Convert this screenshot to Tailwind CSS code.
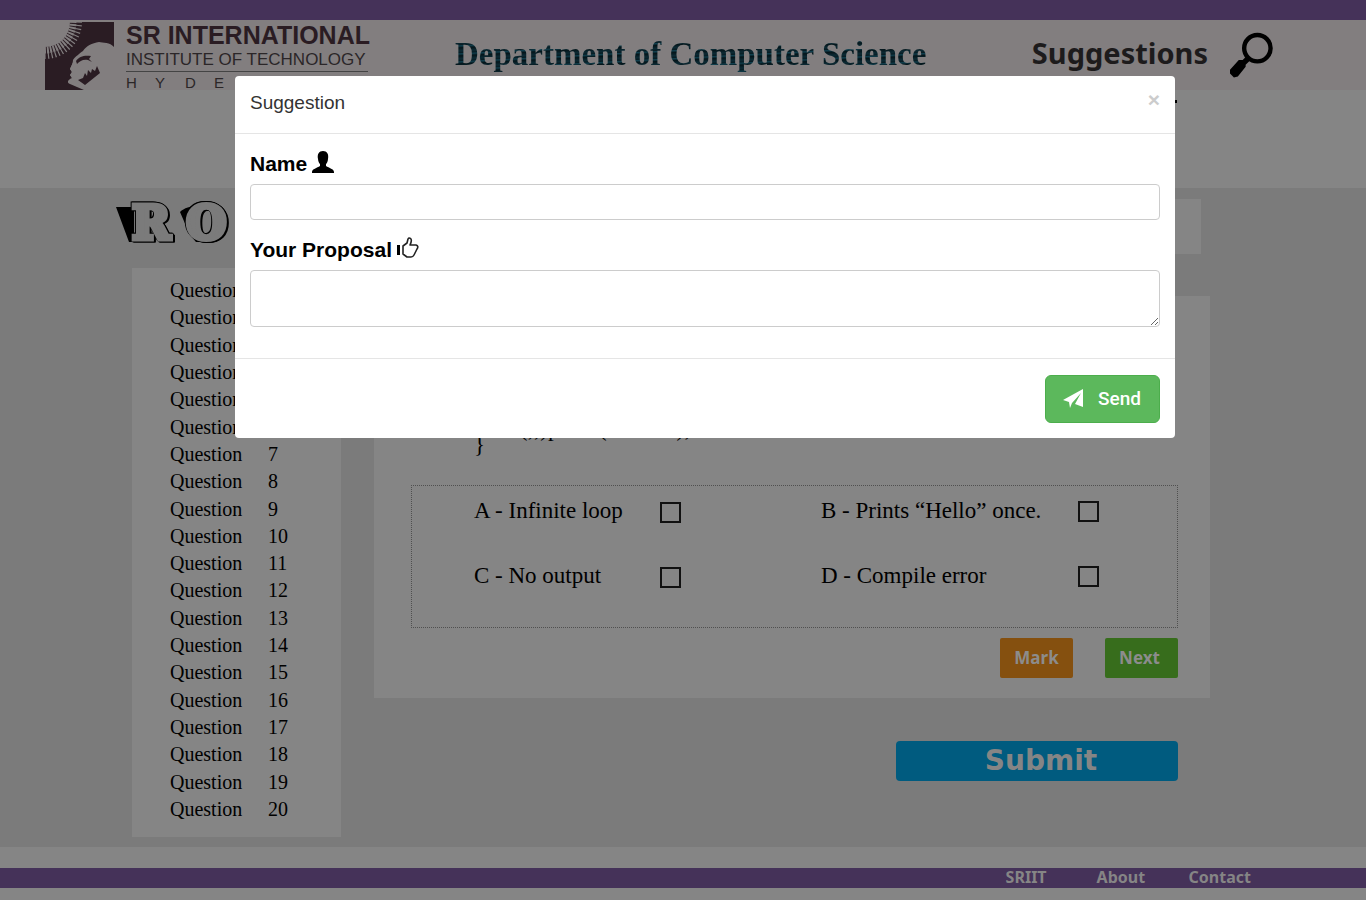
<!DOCTYPE html>
<html lang="en">
<head>
<meta charset="utf-8">
<meta name="viewport" content="width=device-width, initial-scale=1">
<title>SR International – Suggestion</title>
<script src="https://cdn.jsdelivr.net/npm/@tailwindcss/browser@4"></script>
</head>
<body class="relative min-h-screen bg-[#858585] text-black font-['Liberation_Sans',Arial,sans-serif]">

<div class="h-5 bg-[#453259]"></div>

<header class="flex h-[70px] items-start overflow-hidden bg-[#827e7f] pl-[45px] pr-[92px]">
  <svg class="mt-[2px] h-[68px] w-[69px] shrink-0" viewBox="0 0 69 68" aria-hidden="true">
    <path fill="#2a1c23" d="M0 0H69V25C65 20 58 21 54 20C47 21 41 24 38 29C35 31 30 35 28 38C28 42 26 44 25 47L27 50L25 53L27 56C22 58 22 61 25 62L39 68H0Z"/>
    <circle cx="0" cy="0" r="25" fill="#827e7f"/>
    <circle cx="0" cy="0" r="28" fill="none" stroke="#827e7f" stroke-width="7" pathLength="360" stroke-dasharray="4 2" stroke-dashoffset="2"/>
    <circle cx="0" cy="0" r="34" fill="none" stroke="#827e7f" stroke-width="6" pathLength="360" stroke-dasharray="2 4" stroke-dashoffset="1"/>
    <path fill="#827e7f" d="M29 38L32 43L34 46L41 53L40 57L31 60L27 56L25 53L27 50L25 47Z"/>
    <path fill="#2a1c23" d="M31 39C34 34 40 33 46 34L44 37L47 40L43 38C38 37 35 39 32 42Z"/>
    <path fill="#2a1c23" d="M52 44L55 51L40 63L33 58L38 56L40 51L42 54L43 48L46 51L47 47L50 49Z"/>
  </svg>
  <div class="ml-3 w-[242px] shrink-0 whitespace-nowrap">
    <div class="h-[30px] text-[25px] leading-[30px] font-bold text-[#2a1c23]">SR INTERNATIONAL</div>
    <div class="h-[22px] border-b border-[#444] text-[17px] leading-[20px] text-[#2b2628]">INSTITUTE OF TECHNOLOGY</div>
    <div class="flex pt-[3px] text-[15px] leading-4 text-[#2b2628]"><span class="w-[29px]">H</span><span class="w-[30px]">Y</span><span class="w-[29px]">D</span><span class="w-[29px]">E</span></div>
  </div>
  <h1 class="ml-[87px] mt-3 whitespace-nowrap bg-[repeating-linear-gradient(177deg,#04151a_0px,#0c2a34_3px,#071d24_5px,#11404f_6px,#04151a_8px)] bg-clip-text text-[33px] leading-[44px] font-bold text-transparent font-['Liberation_Serif',serif]">Department of Computer Science</h1>
  <a href="#suggestion" class="ml-auto mt-3 flex text-[29px] leading-[42px] font-bold text-[#1d1b1c] font-['Noto_Sans',sans-serif]">Suggestions
    <svg class="ml-[22px] h-[46px] w-[44px]" viewBox="0 0 45 46" aria-hidden="true"><circle cx="28" cy="16" r="13.5" fill="none" stroke="#000" stroke-width="4.5"/><path d="M17 24L21 28L16 33V35L8 45L4 46L0 42V38L9 28L13 28Z"/></svg>
  </a>
</header>

<div class="flex h-[98px] justify-end pr-[189px] pt-[10px]"><span class="h-[3px] w-[2px] bg-black"></span></div>

<main class="flex min-h-[659px] gap-[33px] bg-[#7b7b7b] pl-[132px] pr-[156px]">
  <aside class="w-[209px] shrink-0">
    <div class="relative mt-[11px] h-[69px]">
      <svg class="absolute -left-4 top-0 h-[46px] w-[120px]" viewBox="0 0 120 46" aria-hidden="true"><path d="M0 8H18V43H13ZM64 13C68 9 74 7 84 7V43H80L74 36Z"/></svg>
      <h2 class="relative flex gap-4 whitespace-nowrap text-[46px] leading-[48px] font-bold text-[#7b7b7b] [-webkit-text-stroke:5px_#7b7b7b] [filter:drop-shadow(1px_1px_0_black)_drop-shadow(-1px_-1px_0_black)_drop-shadow(1px_0_0_black)] font-['DejaVu_Serif',serif]"><span>R</span><span>O</span></h2>
    </div>
    <ol class="flex h-[569px] flex-col justify-between bg-[#858585] pt-[9px] pb-[14px] pl-[38px] text-[20px] leading-[27px] font-['Liberation_Serif',serif]">
      <li class="flex"><span class="w-[98px]">Question</span>1</li>
      <li class="flex"><span class="w-[98px]">Question</span>2</li>
      <li class="flex"><span class="w-[98px]">Question</span>3</li>
      <li class="flex"><span class="w-[98px]">Question</span>4</li>
      <li class="flex"><span class="w-[98px]">Question</span>5</li>
      <li class="flex"><span class="w-[98px]">Question</span>6</li>
      <li class="flex"><span class="w-[98px]">Question</span>7</li>
      <li class="flex"><span class="w-[98px]">Question</span>8</li>
      <li class="flex"><span class="w-[98px]">Question</span>9</li>
      <li class="flex"><span class="w-[98px]">Question</span>10</li>
      <li class="flex"><span class="w-[98px]">Question</span>11</li>
      <li class="flex"><span class="w-[98px]">Question</span>12</li>
      <li class="flex"><span class="w-[98px]">Question</span>13</li>
      <li class="flex"><span class="w-[98px]">Question</span>14</li>
      <li class="flex"><span class="w-[98px]">Question</span>15</li>
      <li class="flex"><span class="w-[98px]">Question</span>16</li>
      <li class="flex"><span class="w-[98px]">Question</span>17</li>
      <li class="flex"><span class="w-[98px]">Question</span>18</li>
      <li class="flex"><span class="w-[98px]">Question</span>19</li>
      <li class="flex"><span class="w-[98px]">Question</span>20</li>
    </ol>
  </aside>

  <section class="flex grow flex-col pt-[11px]">
    <div class="mr-[9px] h-[55px] w-[200px] self-end bg-[#858585]"></div>
    <div class="mt-[42px] h-[402px] bg-[#858585] pl-[37px] pr-8 pt-[125px]">
      <div class="h-[64px] pl-[63px] text-[23px] leading-4 font-['Liberation_Serif',serif]">
        <div class="pl-[19px]">for(;;)printf("Hello");</div>
        <div>}</div>
      </div>
      <div class="grid h-[143px] grid-cols-[186px_161px_257px_1fr] grid-rows-[65px_65px] border border-dotted border-[#505050] pl-[62px] pt-[10px] text-[23px] leading-[30px] font-['Liberation_Serif',serif]">
        <label for="a">A - Infinite loop</label><input id="a" type="checkbox" class="mt-[6px] size-[21px] appearance-none border-2 border-[#111]">
        <label for="b">B - Prints “Hello” once.</label><input id="b" type="checkbox" class="mt-[5px] size-[21px] appearance-none border-2 border-[#111]">
        <label for="c">C - No output</label><input id="c" type="checkbox" class="mt-[6px] size-[21px] appearance-none border-2 border-[#111]">
        <label for="d">D - Compile error</label><input id="d" type="checkbox" class="mt-[5px] size-[21px] appearance-none border-2 border-[#111]">
      </div>
      <div class="mt-[10px] flex justify-end gap-8 text-[17px] leading-[38px] font-bold text-[#8c8c8c] font-['Noto_Sans',sans-serif]">
        <button type="button" class="h-10 w-[73px] rounded-xs bg-[#85500f]">Mark</button>
        <button type="button" class="h-10 w-[73px] rounded-xs bg-[#376d1c] pr-1">Next</button>
      </div>
    </div>
    <button type="button" class="mr-8 mt-[43px] h-10 w-[282px] self-end rounded bg-[#005b7f] pl-2 text-[28px] leading-[36px] font-bold text-[#858585] font-['DejaVu_Sans',sans-serif]">Submit</button>
  </section>
</main>

<footer class="pt-[21px]">
  <nav class="flex h-5 justify-end bg-[#453259] pr-[115px] text-[16px] leading-[18px] font-bold text-[#858585] font-['Noto_Sans',sans-serif]">
    <a href="#sriit" class="w-[91px]">SRIIT</a><a href="#about" class="w-[92px]">About</a><a href="#contact">Contact</a>
  </nav>
</footer>

<div class="absolute inset-x-0 top-[76px] pl-[235px] pr-[191px]">
  <form id="suggestion" role="dialog" aria-labelledby="dialog-title" class="rounded bg-white">
    <div class="flex h-[58px] items-start justify-between border-b border-[#e5e5e5] px-[15px] pt-[15px]">
      <h2 id="dialog-title" class="text-[19px] leading-6 text-[#333]">Suggestion</h2>
      <button type="button" aria-label="Close" class="text-[21px] leading-[18px] font-bold text-[#ccc]">×</button>
    </div>
    <div class="px-[15px] pb-[31px] pt-[15px]">
      <label for="name" class="flex h-[35px] text-[21px] leading-[30px] font-bold">Name
        <svg class="ml-[5px] mt-[2px] h-[22px] w-[22px]" viewBox="0 0 22 22" aria-hidden="true"><path d="M11 0C15 0 17 3 16 8C16 11 14 13 14 13V15C17 17 22 18 22 21V22H0V21C0 18 5 17 8 15V13C8 13 6 11 6 8C5 3 7 0 11 0Z"/></svg>
      </label>
      <input id="name" type="text" class="block h-9 w-full rounded border border-[#ccc] px-3">
      <label for="proposal" class="mt-[15px] flex h-[35px] text-[21px] leading-[30px] font-bold">Your Proposal
        <svg class="ml-[5px] mt-[2px] h-[22px] w-[22px]" viewBox="0 0 22 22" aria-hidden="true"><path d="M0 8H3V18H0Z"/><path d="M6 9L10 6L11 2Q12 0 14 2Q15 4 13 8H19Q22 9 20 12L17 18Q16 20 14 20H10L6 17Z" fill="none" stroke="#222" stroke-width="1.6" stroke-linejoin="round"/></svg>
      </label>
      <textarea id="proposal" class="block h-[57px] w-full resize rounded border border-[#ccc] px-3"></textarea>
    </div>
    <div class="flex justify-end border-t border-[#e5e5e5] px-[15px] pb-[15px] pt-4">
      <button type="submit" class="flex h-12 w-[115px] items-center gap-[15px] rounded-md border border-[#4cae4c] bg-[#5cb85c] pl-[17px] text-[19px] leading-6 font-medium text-white font-['Roboto',sans-serif]">
        <svg class="h-5 w-5" viewBox="0 0 20 20" aria-hidden="true"><path fill="#fff" d="M20 0V18L12 15L18 4L9 14L7 19L6 13L0 11Z"/></svg>Send</button>
    </div>
  </form>
</div>
</body>
</html>
